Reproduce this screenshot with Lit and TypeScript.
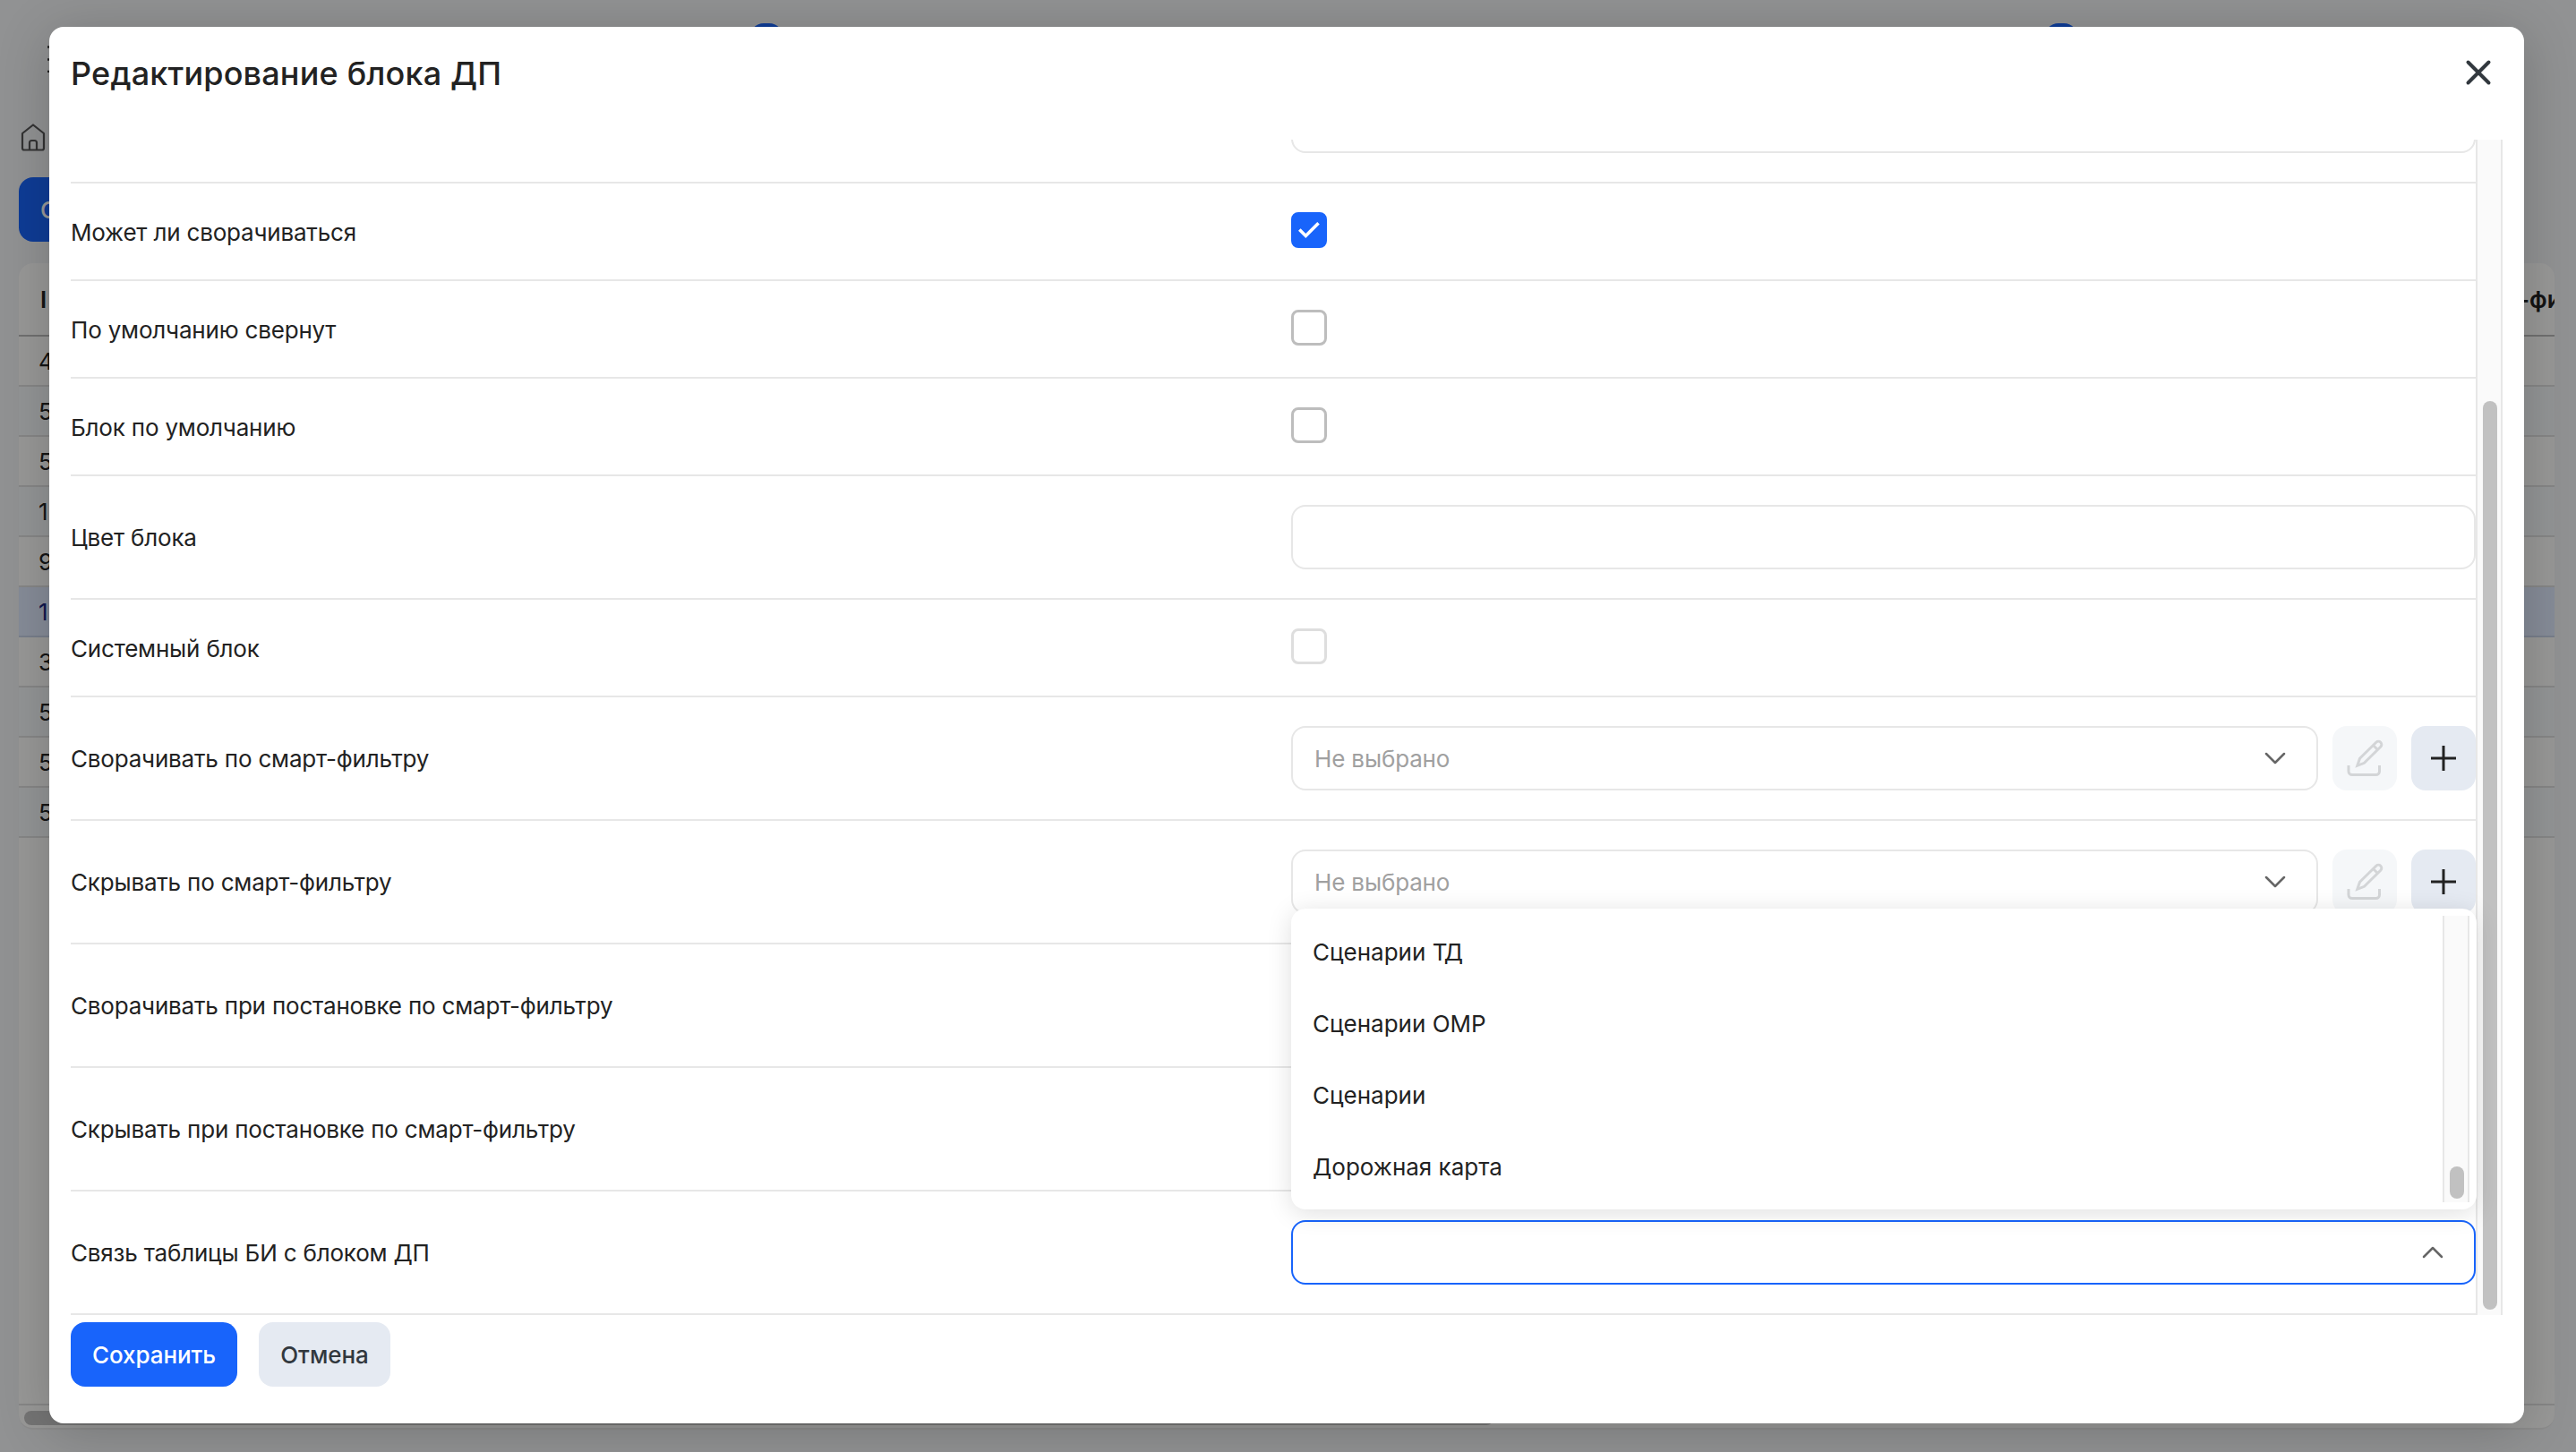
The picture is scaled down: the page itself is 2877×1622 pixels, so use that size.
import { LitElement, html, css, nothing } from "lit";
import { customElement } from "lit/decorators.js";
import { classMap } from "lit/directives/class-map.js";

type Kind = "input" | "checkbox" | "filter" | "select";

interface Field {
  label: string;
  kind: Kind;
  checked?: boolean;
  disabled?: boolean;
}

const FIELDS: Field[] = [
  { label: "", kind: "input" },
  { label: "Может ли сворачиваться", kind: "checkbox", checked: true },
  { label: "По умолчанию свернут", kind: "checkbox" },
  { label: "Блок по умолчанию", kind: "checkbox" },
  { label: "Цвет блока", kind: "input" },
  { label: "Системный блок", kind: "checkbox", disabled: true },
  { label: "Сворачивать по смарт-фильтру", kind: "filter" },
  { label: "Скрывать по смарт-фильтру", kind: "filter" },
  { label: "Сворачивать при постановке по смарт-фильтру", kind: "input" },
  { label: "Скрывать при постановке по смарт-фильтру", kind: "input" },
  { label: "Связь таблицы БИ с блоком ДП", kind: "select" },
];

const OPTIONS = ["Сценарии ТД", "Сценарии ОМР", "Сценарии", "Дорожная карта"];

const ROWS = ["4", "5", "5", "1", "9", "1", "3", "5", "5", "5"];
const SELECTED_ROW = 5;

const chevron = (up = false) => html`
  <svg class="chevron" width="24" height="24" viewBox="0 0 24 24">
    <path d=${up ? "M2 17 12 7 22 17" : "M2 7 12 17 22 7"} />
  </svg>
`;

// Page under the modal
@customElement("blocks-page")
class BlocksPage extends LitElement {
  static styles = css`
    :host {
      display: flex;
      flex-direction: column;
      box-sizing: border-box;
      height: 1622px;
      padding: 26px 24px 25px 21px;
      background: #f2f3f6;
      color: #222;
      font-size: 26px;
    }
    .topbar {
      display: flex;
      height: 112px;
    }
    .menu {
      width: 34px;
      height: 30px;
      margin: 25px 0 0 32px;
      stroke: #333;
      stroke-width: 2.5;
    }
    .badge {
      width: 38px;
      height: 32px;
      border-radius: 16px;
      background: #1864fb;
    }
    .badge-first {
      margin-left: 750px;
    }
    .badge-second {
      margin-left: 1408px;
    }
    .home {
      display: block;
      width: 32px;
      height: 32px;
      fill: none;
      stroke: #555;
      stroke-width: 2.2;
      stroke-linejoin: round;
    }
    .create {
      display: flex;
      align-items: center;
      box-sizing: border-box;
      width: 180px;
      height: 72px;
      margin: 28px 0 24px;
      padding-left: 24px;
      border-radius: 16px;
      background: #1864fb;
      color: #fff;
      font-weight: 500;
    }
    .table {
      display: flex;
      flex-direction: column;
      flex: 1;
      overflow: hidden;
      border-radius: 16px;
      border-bottom: 2px solid #eaeaea;
      background: #fefdfc;
    }
    .head,
    .row {
      display: flex;
      align-items: center;
      justify-content: space-between;
      box-sizing: border-box;
      padding-left: 22px;
    }
    .head {
      height: 82px;
      padding-left: 24px;
      border-bottom: 2px solid #bbb;
      font-weight: 600;
    }
    .head-last {
      width: 40px;
      overflow: hidden;
      white-space: nowrap;
    }
    .row {
      height: 56px;
      border-bottom: 2px solid #e0e0e0;
    }
    .row.even {
      background: #f6f8fa;
    }
    .row.selected {
      background: #dfe9fd;
      color: #1a2580;
      border-color: #c8d2e8;
    }
    .hscroll {
      height: 16px;
      margin-top: auto;
      padding: 6px 6px 3px;
      border-top: 2px solid #e0e0e0;
    }
    .hthumb {
      width: 1641px;
      height: 16px;
      border-radius: 8px;
      background: #c1c1c1;
    }
  `;

  render() {
    return html`
      <div class="topbar">
        <svg class="menu" viewBox="0 0 34 30">
          <path d="M0 1.500h34M0 15.500h34M0 29h34" />
        </svg>
        <div class="badge badge-first"></div>
        <div class="badge badge-second"></div>
      </div>
      <svg class="home" viewBox="0 0 32 32">
        <path d="M4 11 16 1.500 28 11V27.500a2 2 0 0 1-2 2H6a2 2 0 0 1-2-2z" />
        <path d="M12 29V21.500a2.500 2.500 0 0 1 2.500-2.500h3a2.500 2.500 0 0 1 2.500 2.500V29" />
      </svg>
      <div class="create">С</div>
      <div class="table">
        <div class="head">
          <span>I</span>
          <span class="head-last">-фи</span>
        </div>
        ${ROWS.map(
          (id, i) => html`
            <div
              class=${classMap({
                row: true,
                even: i % 2 === 1,
                selected: i === SELECTED_ROW,
              })}
            >
              ${id}
            </div>
          `
        )}
        <div class="hscroll"><div class="hthumb"></div></div>
      </div>
    `;
  }
}

@customElement("edit-block-modal")
class EditBlockModal extends LitElement {
  static styles = css`
    :host {
      display: flex;
      flex-direction: column;
      box-sizing: border-box;
      border-radius: 16px;
      background: #fff;
      box-shadow: 0 8px 60px rgba(0, 0, 0, 0.2);
      color: #222;
      font-size: 26px;
    }
    .header {
      display: flex;
      justify-content: space-between;
      align-items: center;
      height: 102px;
      padding: 0 35px 0 24px;
      margin-bottom: 24px;
    }
    .title {
      margin: 0;
      padding-top: 1px;
      font-size: 36px;
      font-weight: 500;
      letter-spacing: 0.18px;
    }
    .close {
      width: 32px;
      height: 32px;
      stroke: #32383e;
      stroke-width: 4;
      stroke-linecap: round;
    }
    .body {
      display: flex;
      height: 1313px;
      margin: 0 24px;
      overflow: hidden;
    }
    .form {
      display: flex;
      flex-direction: column;
      justify-content: flex-end;
      flex: 1;
    }
    .field {
      display: grid;
      grid-template-columns: 1363px 1fr;
      flex: none;
      padding: 32px 0;
      border-bottom: 2px solid #e7e7e7;
    }
    .field.checkbox {
      padding-bottom: 35px;
    }
    .label {
      align-self: center;
      letter-spacing: -0.19px;
    }
    .checkbox .label {
      padding-top: 5px;
    }
    .control {
      display: flex;
      gap: 16px;
      position: relative;
    }
    .box {
      display: flex;
      align-items: center;
      justify-content: space-between;
      flex: 1;
      box-sizing: border-box;
      height: 72px;
      padding: 0 34px 0 24px;
      border: 2px solid #e7e7e7;
      border-radius: 16px;
      background: #fff;
    }
    .box.open {
      border-color: #1864fb;
    }
    .placeholder {
      color: #a0a0a0;
      letter-spacing: -0.15px;
    }
    .chevron {
      fill: none;
      stroke: #666;
      stroke-width: 2.5;
      stroke-linecap: round;
      stroke-linejoin: round;
    }
    .check {
      display: flex;
      box-sizing: border-box;
      width: 40px;
      height: 40px;
      border: 3px solid #bdbdbd;
      border-radius: 8px;
    }
    .check.disabled {
      border-color: #dedede;
    }
    .check.checked {
      border-color: #1864fb;
      background: #1864fb;
    }
    .check svg {
      fill: none;
      stroke: #fff;
      stroke-width: 3.6;
    }
    .icon-btn {
      display: flex;
      align-items: center;
      justify-content: center;
      width: 72px;
      height: 72px;
      border-radius: 16px;
      background: #e5eaf2;
    }
    .icon-btn svg {
      fill: none;
      stroke: #222;
      stroke-width: 3;
    }
    .icon-btn.disabled {
      background: #f5f7f9;
    }
    .icon-btn.disabled svg {
      stroke: #d3d5d7;
    }
    .dropdown {
      position: absolute;
      z-index: 1;
      left: 0;
      right: -1px;
      bottom: calc(100% + 12px);
      display: flex;
      box-sizing: border-box;
      height: 336px;
      padding: 8px 8px 8px 0;
      border-radius: 16px;
      background: #fff;
      box-shadow: 0 4px 28px rgba(0, 0, 0, 0.13);
    }
    .options {
      flex: 1;
    }
    .option {
      display: flex;
      align-items: center;
      height: 80px;
      padding: 1px 0 0 24px;
      box-sizing: border-box;
    }
    .scrollbar {
      display: flex;
      flex-direction: column;
      justify-content: flex-end;
      align-items: center;
      box-sizing: border-box;
      width: 30px;
      border: solid #e7e7e7;
      border-width: 0 2px;
      background: #fafafa;
    }
    .thumb {
      width: 16px;
      height: 1015px;
      margin: 0 0 6px 2px;
      border-radius: 8px;
      background: #c1c1c1;
    }
    .dropdown .thumb {
      height: 36px;
      margin-bottom: 4px;
    }
    .footer {
      display: flex;
      gap: 24px;
      padding: 8px 24px;
    }
    .btn {
      display: flex;
      align-items: center;
      justify-content: center;
      width: 147px;
      height: 72px;
      border-radius: 16px;
      background: #e5eaf2;
      color: #32383e;
      font-weight: 500;
      letter-spacing: -0.05px;
    }
    .btn.primary {
      width: 186px;
      background: #1864fb;
      color: #fff;
    }
  `;

  renderCheckbox(field: Field) {
    const classes = {
      check: true,
      checked: !!field.checked,
      disabled: !!field.disabled,
    };
    return html`
      <div class=${classMap(classes)}>
        ${field.checked
          ? html`<svg width="34" height="34" viewBox="0 0 34 34">
              <path d="M6.300 16.500 13.300 23.500 27.500 9.200" />
            </svg>`
          : nothing}
      </div>
    `;
  }

  renderFilter() {
    return html`
      <div class="box">
        <span class="placeholder">Не выбрано</span>
        ${chevron()}
      </div>
      <div class="icon-btn disabled">
        <svg width="44" height="44" viewBox="0 0 44 44">
          <path d="M4 30v6.500a4 4 0 0 0 4 4h26.500a4 4 0 0 0 4-4V30" />
          <path
            d="M13.800 30.300 16.500 22.300 34.800 4.200a3.400 3.400 0 0 1 5 5L21.500 27.300zM31.500 7.500l5 5"
          />
        </svg>
      </div>
      <div class="icon-btn">
        <svg width="28" height="28" viewBox="0 0 28 28">
          <path d="M14 0v28M0 14h28" />
        </svg>
      </div>
    `;
  }

  renderSelect() {
    return html`
      <div class="box open"><span></span>${chevron(true)}</div>
      <div class="dropdown">
        <div class="options">
          ${OPTIONS.map((o) => html`<div class="option">${o}</div>`)}
        </div>
        <div class="scrollbar"><div class="thumb"></div></div>
      </div>
    `;
  }

  renderControl(field: Field) {
    switch (field.kind) {
      case "checkbox":
        return this.renderCheckbox(field);
      case "filter":
        return this.renderFilter();
      case "select":
        return this.renderSelect();
      default:
        return html`<div class="box"></div>`;
    }
  }

  render() {
    return html`
      <div class="header">
        <h2 class="title">Редактирование блока ДП</h2>
        <svg class="close" viewBox="0 0 32 32">
          <path d="M4.500 4.500 27.500 27.500M27.500 4.500 4.500 27.500" />
        </svg>
      </div>
      <div class="body">
        <div class="form">
          ${FIELDS.map(
            (field) => html`
              <div class="field ${field.kind}">
                <div class="label">${field.label}</div>
                <div class="control">${this.renderControl(field)}</div>
              </div>
            `
          )}
        </div>
        <div class="scrollbar"><div class="thumb"></div></div>
      </div>
      <div class="footer">
        <div class="btn primary">Сохранить</div>
        <div class="btn">Отмена</div>
      </div>
    `;
  }
}

@customElement("app-root")
class AppRoot extends LitElement {
  static styles = css`
    :host {
      display: block;
      position: relative;
      width: 2877px;
      height: 1622px;
      overflow: hidden;
      font-family: Inter, "Open Sans", sans-serif;
    }
    .overlay {
      position: absolute;
      inset: 0;
      padding: 30px 58px 32px 55px;
      background: rgba(0, 0, 0, 0.4);
    }
    edit-block-modal {
      height: 1560px;
    }
  `;

  render() {
    return html`
      <blocks-page></blocks-page>
      <div class="overlay">
        <edit-block-modal></edit-block-modal>
      </div>
    `;
  }
}
